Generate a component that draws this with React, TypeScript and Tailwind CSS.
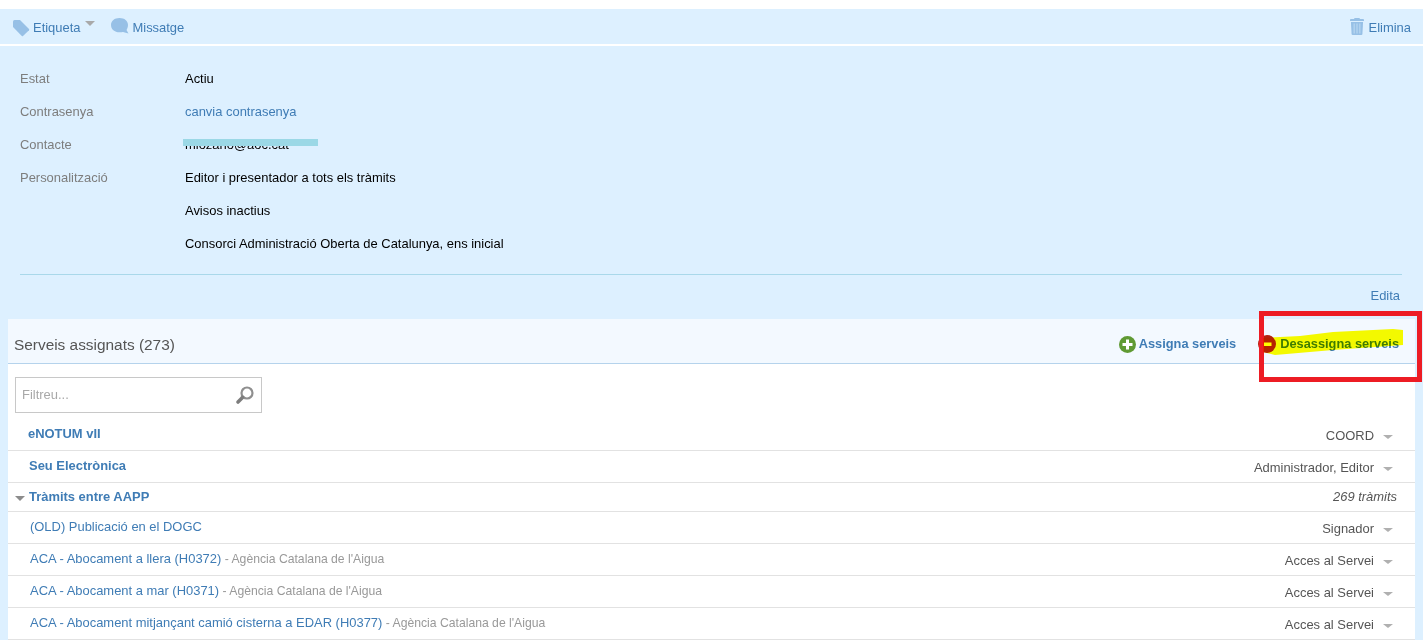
const LINK = "text-[#3f7cb5]";

function Caret({ className = "" }: { className?: string }) {
  return <span className={"inline-block w-0 h-0 border-x-transparent " + className} />;
}

function TagIcon() {
  return (
    <svg width="18" height="18" viewBox="0 0 18 18" className="shrink-0 mt-[2px]">
      <path d="M1 2.5 Q1 1 2.5 1 H8 L17 10 Q17.5 10.6 17 11.2 L11 17 Q10.4 17.5 9.8 17 L1 8 Z" fill="#97c0e6" />
    </svg>
  );
}

function BubbleIcon() {
  return (
    <svg width="18" height="17" viewBox="0 0 18 17" className="shrink-0">
      <path d="M8.5 0 C13.5 0 17 2.8 17 7 C17 9.5 16 11 15.5 12 L17.5 15.5 L12 14 C11 14.2 9.8 14.3 8.5 14.3 C3.5 14.3 0 11.2 0 7 C0 2.8 3.5 0 8.5 0 Z" fill="#97c0e6" />
    </svg>
  );
}

function TrashIcon() {
  return (
    <svg width="14" height="17" viewBox="0 0 15 17" preserveAspectRatio="none" className="shrink-0">
      <path d="M4.5 0.5 Q4.5 0 5 0 H10 Q10.5 0 10.5 0.5 V1 H14 Q15 1 15 2 V3 H0 V2 Q0 1 1 1 H4.5 Z" fill="#97c0e6" />
      <path d="M1 4 H14 L13.3 16 Q13.2 17 12.2 17 H2.8 Q1.8 17 1.7 16 Z" fill="#97c0e6" />
      <path d="M4.5 5.5 V15.5 M7.5 5.5 V15.5 M10.5 5.5 V15.5" stroke="#b3d3ef" strokeWidth="1.5" />
    </svg>
  );
}

function PlusIcon() {
  return (
    <svg width="17" height="17" viewBox="0 0 17 17" className="shrink-0">
      <circle cx="8.5" cy="8.5" r="8.5" fill="#5f9a33" />
      <path d="M7 3.5 H10 V7 H13.5 V10 H10 V13.5 H7 V10 H3.5 V7 H7 Z" fill="#ffffff" />
    </svg>
  );
}

function MinusIcon() {
  return (
    <svg width="18" height="18" viewBox="0 0 18 18" className="shrink-0 ml-[22px]">
      <circle cx="9" cy="9" r="9" fill="#b5220f" />
      <rect x="4.5" y="7.5" width="9" height="3.5" fill="#ffffff" />
    </svg>
  );
}

function SearchIcon() {
  return (
    <svg width="20" height="20" viewBox="0 0 20 20" className="shrink-0">
      <circle cx="12" cy="8" r="5.5" fill="none" stroke="#8f8f8f" strokeWidth="2.2" />
      <path d="M7.5 12.5 L3 17" stroke="#7d7d7d" strokeWidth="3.6" strokeLinecap="round" />
    </svg>
  );
}

const details = [
  ["Estat", "Actiu"],
  ["Contrasenya", "canvia contrasenya"],
  ["Contacte", "mlozano@aoc.cat"],
  ["Personalització", "Editor i presentador a tots els tràmits"],
  ["", "Avisos inactius"],
  ["", "Consorci Administració Oberta de Catalunya, ens inicial"],
];

const rows = [
  { name: "(OLD) Publicació en el DOGC", role: "Signador" },
  { name: "ACA - Abocament a llera (H0372)", org: "Agència Catalana de l'Aigua", role: "Acces al Servei" },
  { name: "ACA - Abocament a mar (H0371)", org: "Agència Catalana de l'Aigua", role: "Acces al Servei" },
  { name: "ACA - Abocament mitjançant camió cisterna a EDAR (H0377)", org: "Agència Catalana de l'Aigua", role: "Acces al Servei" },
];

function RoleCell({ role, className = "" }: { role: string; className?: string }) {
  return (
    <div className={"flex items-center font-normal text-[#555555] " + className}>
      <span>{role}</span>
      <Caret className="ml-[9px] mt-[3px] border-x-[5px] border-t-[4px] border-t-[#b0b0b0]" />
    </div>
  );
}

export default function App() {
  return (
    <div className="relative w-[1428px] h-[640px] overflow-hidden bg-white text-[12.95px] leading-[16px] font-['Liberation_Sans',Arial,sans-serif]">
      <div className="w-[1423px] h-[640px] mt-[9px] bg-[#ddf0ff]">
        {/* toolbar */}
        <div className={"h-[35px] flex items-center px-[12px] " + LINK}>
          <TagIcon />
          <span className="ml-[3px] mt-[2px]">Etiqueta</span>
          <Caret className="ml-[5px] mb-[7px] border-x-[5px] border-t-[5px] border-t-[#a9a9a9]" />
          <span className="ml-[16px]"><BubbleIcon /></span>
          <span className="ml-[3px] mt-[2px]">Missatge</span>
          <span className="ml-auto"><TrashIcon /></span>
          <span className="ml-[5px] mt-[2px]">Elimina</span>
        </div>
        <div className="h-[2px] bg-white" />

        {/* account details */}
        <div className="px-[20px] pt-[24px]">
          {details.map(([label, value], i) => (
            <div key={i} className="relative flex h-[33px] pt-[1px]">
              <div className="w-[165px] text-[#7d7d7d]">{label}</div>
              <div className={label === "Contrasenya" ? LINK : "text-black"}>{value}</div>
              {label === "Contacte" && <div className="absolute left-[163px] top-[3px] w-[135px] h-[7px] bg-[#9bd8e6]" />}
            </div>
          ))}
          <div className="mt-[6px] h-px w-[1382px] bg-[#a9d8ea]" />
          <div className={"mt-[13px] h-[16px] w-[1380px] text-right " + LINK}>Edita</div>
        </div>

        {/* assigned services */}
        <div className="mt-[15px] ml-[8px] w-[1407px] bg-white">
          <div className="h-[45px] flex items-center pl-[6px] pr-[16px] bg-[#f3f9ff] border-b border-[#b5d3ec]">
            <span className="text-[15.4px] text-[#555555] mt-[8px]">Serveis assignats (273)</span>
            <div className={"ml-auto flex items-center font-bold text-[12.8px] mt-[6px] " + LINK}>
              <PlusIcon />
              <span className="ml-[3px]">Assigna serveis</span>
              <MinusIcon />
              <span className="ml-[4px]">Desassigna serveis</span>
            </div>
          </div>

          <div className="pt-[13px] pl-[7px]">
            <div className="w-[247px] h-[36px] flex items-center justify-between pl-[6px] pr-[6px] border border-[#c8c8c8] text-[#a8a8a8]">
              <span>Filtreu...</span>
              <SearchIcon />
            </div>
          </div>

          <div className={"h-[38px] flex items-center justify-between pl-[20px] pr-[22px] border-b border-[#e2e2e2] font-bold " + LINK}>
            <span className="mt-[4px]">eNOTUM vII</span>
            <RoleCell role="COORD" className="mt-[8px]" />
          </div>
          <div className={"h-[32px] flex items-center justify-between pl-[21px] pr-[22px] border-b border-[#e2e2e2] font-bold " + LINK}>
            <span className="mb-[1px]">Seu Electrònica</span>
            <RoleCell role="Administrador, Editor" className="mt-[2px]" />
          </div>
          <div className="h-[29px] flex items-center justify-between pl-[7px] pr-[18px] border-b border-[#e2e2e2]">
            <span className={"flex items-center font-bold " + LINK}>
              <Caret className="border-x-[5px] border-t-[5px] border-t-[#8c8c8c] mr-[4px] mt-[3px]" />
              Tràmits entre AAPP
            </span>
            <span className="italic text-[#555555]">269 tràmits</span>
          </div>
          {rows.map((r) => (
            <div key={r.name} className="h-[32px] flex items-center justify-between pl-[22px] pr-[22px] border-b border-[#e2e2e2]">
              <span className={"mb-[1px] " + LINK}>
                {r.name}
                {r.org && <span className="text-[12.2px] text-[#999999]"> - {r.org}</span>}
              </span>
              <RoleCell role={r.role} className="mt-[2px]" />
            </div>
          ))}
        </div>
      </div>

      {/* annotation drawn over the screenshot */}
      <div className="absolute left-[1259px] top-[311px] w-[163px] h-[71px] border-[5px] border-[#ed1c24]" />
      <svg className="absolute left-[1258px] top-[325px] mix-blend-multiply" width="146" height="32" viewBox="0 0 146 32">
        <path d="M5 13 L22 12 L42 11 L75 7 L135 4 L145 5 L145 20 L75 25 L17 30 L5 27 Z" fill="#ffff00" />
      </svg>
    </div>
  );
}
